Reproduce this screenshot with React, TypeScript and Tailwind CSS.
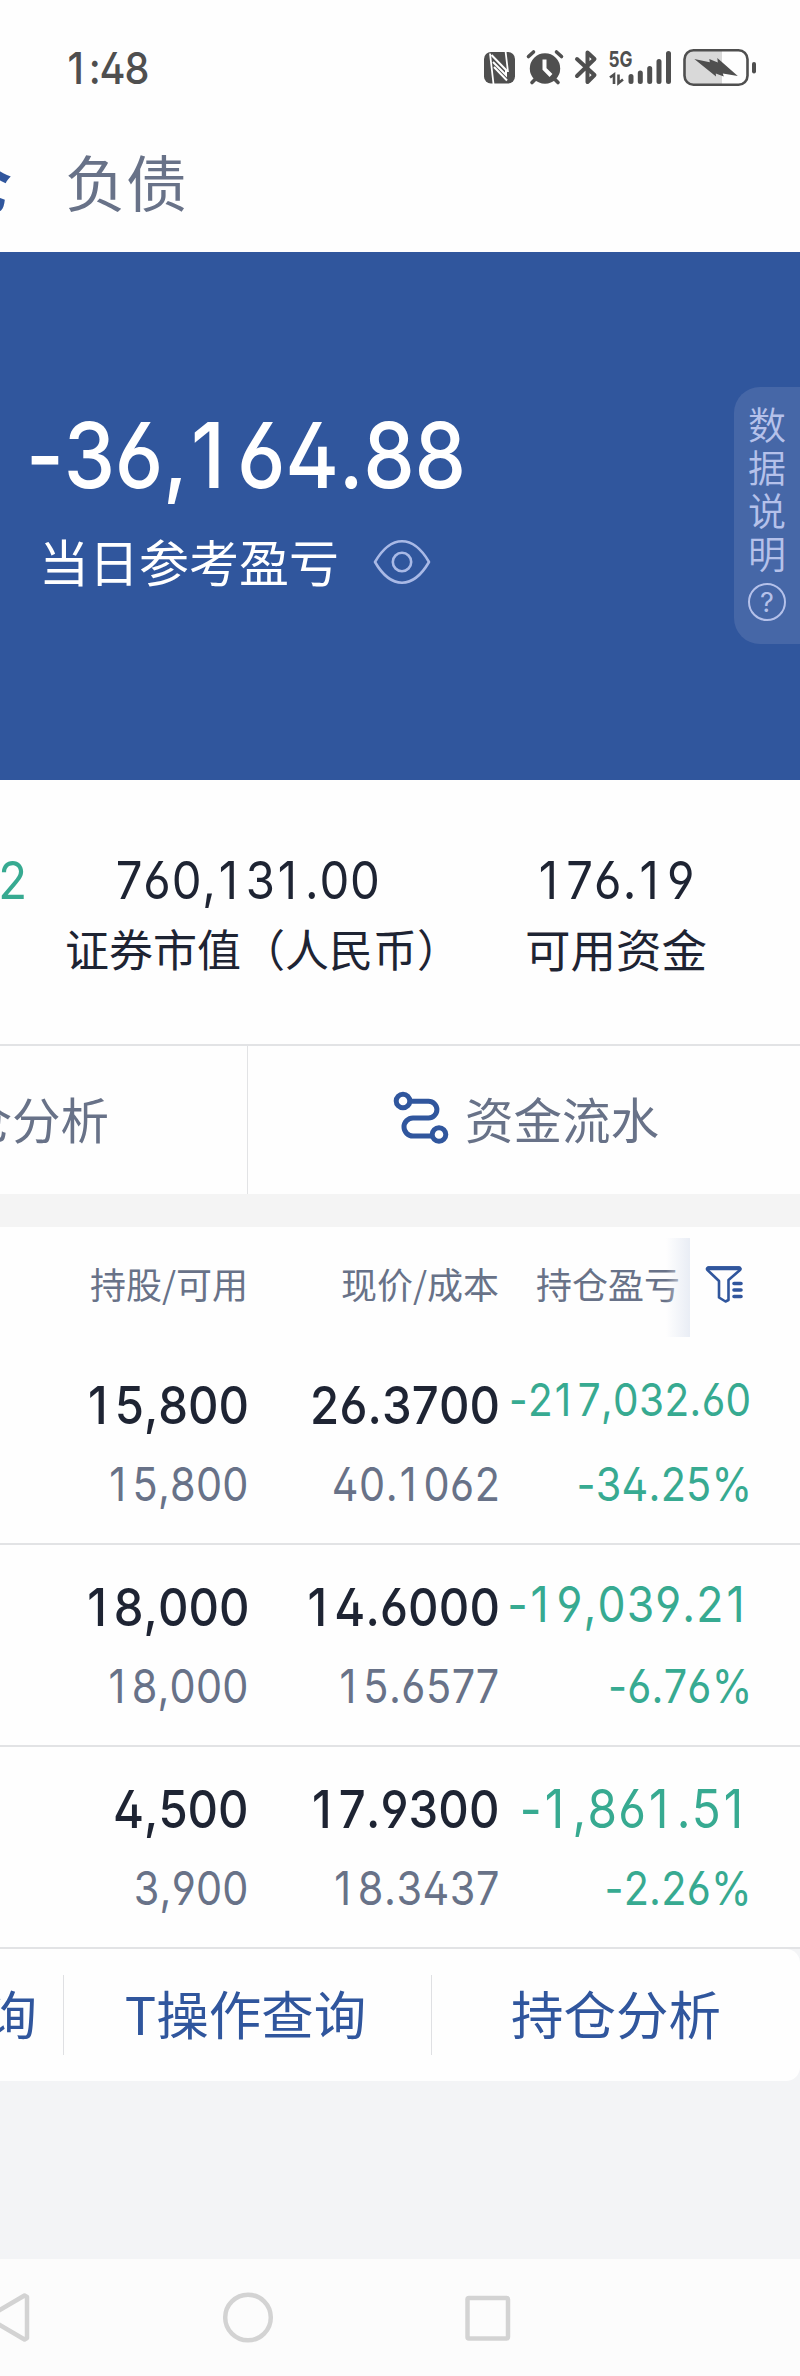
import React from 'react';

interface NumProps {
  children: string;
  className?: string;
}

// Slightly condensed figures with open 4, 6 and 9.
// The narrow "1" is padded to the width of the other digits.
const Num: React.FC<NumProps> = ({ children, className = '' }) => (
  <span className={`block whitespace-nowrap scale-x-[0.9] font-['Inter',sans-serif] [font-feature-settings:'cv02','cv03','cv04','calt'_0,'kern'_0] ${className}`}>
    {children.split(/(1)/).filter(Boolean).map((part, i) => (
      part === '1' ? <span key={i} className="pl-[0.04em] pr-[0.15em]">1</span> : part
    ))}
  </span>
);

const StatusIcons: React.FC = () => (
  <svg width="272" height="40" viewBox="484 48 272 40" fill="none">
    {/* NFC */}
    <rect x="484" y="52" width="31" height="31.5" rx="7" fill="#4f4f4f" />
    <path d="M490 53.5L493.5 84M505.5 51l2.5 21" stroke="#fff" strokeWidth="1.8" />
    <path d="M491.5 55l14.5 15v5L493 62M494 67l13 13.5" stroke="#fff" strokeWidth="2" />
    {/* Alarm */}
    <circle cx="545" cy="68.5" r="15.2" fill="#4f4f4f" />
    <path d="M528.5 56.5l5-4.5M561.5 56.5l-5-4.5M532 82.5l4-4M558 82.5l-4-4" stroke="#4f4f4f" strokeWidth="3.6" strokeLinecap="round" />
    <path d="M544.5 59.5v9.5l6.5 6.5" stroke="#fff" strokeWidth="4" />
    {/* Bluetooth */}
    <path d="M577 59l17.5 16-7 7V52.5l7 6.500L577 76" stroke="#4f4f4f" strokeWidth="4" strokeLinecap="round" strokeLinejoin="round" />
    {/* Signal */}
    <text x="608.5" y="67" fontSize="22" fontWeight="700" fontFamily="Inter" fill="#4f4f4f" textLength="24" lengthAdjust="spacingAndGlyphs">5G</text>
    <path d="M610 77.5l4-3V84M618.5 74.5V83l4.500-3.500" stroke="#4f4f4f" strokeWidth="2.6" />
    <path d="M631 76.5v5M640.3 73v8.5M649.7 68.5v13M659 61.5v20M668.5 53.5v28" stroke="#4f4f4f" strokeWidth="5" strokeLinecap="round" />
    {/* Battery */}
    <path d="M693 50.5h29v34.5h-29a8 8 0 0 1-8-8v-18.5a8 8 0 0 1 8-8z" fill="#d9d9d9" />
    <rect x="684.5" y="50.3" width="63" height="34.5" rx="9" stroke="#4f4f4f" strokeWidth="2.6" />
    <path d="M694.3 59l15.5 3.200-.5-3.200 8.500 3.500-.5-4.500 20.500 18-15-2.500 1 3-8-3 .2 3z" fill="#4f4f4f" />
    <rect x="752" y="62" width="4" height="11.5" rx="2" fill="#4f4f4f" />
  </svg>
);

const EyeIcon: React.FC = () => (
  <svg width="58" height="46" viewBox="0 0 58 46" fill="none" stroke="#a9b9e6" strokeWidth="2.6">
    <path d="M2 23C9 11 18 2.3 29 2.3S49 11 56 23C49 35 40 43.7 29 43.7S9 35 2 23z" strokeLinejoin="round" />
    <circle cx="29" cy="23" r="9.2" />
  </svg>
);

const FlowIcon: React.FC = () => (
  <svg width="56" height="54" viewBox="0 0 56 54" fill="none" stroke="#30569d" strokeWidth="5">
    <circle cx="10" cy="10" r="6.8" />
    <circle cx="46" cy="43.5" r="6.8" />
    <path d="M17 10.2h18.5a8.4 8.4 0 0 1 0 16.8H20a9 9 0 0 0 0 18h19" />
  </svg>
);

const FilterIcon: React.FC = () => (
  <svg width="38" height="38" viewBox="0 0 38 38" fill="none" stroke="#30569d" strokeLinecap="round" strokeLinejoin="round">
    <path d="M3.5 2.5h30.5c1.5 0 2 1.5 1 2.5L23.5 15v20l-3 1.5-6.5-4V16L2.5 5c-1-1-.5-2.5 1-2.5z" strokeWidth="2.6" />
    <path d="M3.5 3.2h30.5" strokeWidth="4" />
    <path d="M29 18.5h7M29 25h7M29 31.5h7" strokeWidth="3.6" />
  </svg>
);

interface Holding {
  shares: string;
  available: string;
  price: string;
  cost: string;
  profit: string;
  rate: string;
  profitClass: string;
}

// Longer profit values are drawn smaller so they fit the column
const holdings: Holding[] = [
  { shares: '15,800', available: '15,800', price: '26.3700', cost: '40.1062', profit: '-217,032.60', rate: '-34.25%', profitClass: 'text-[45px] tracking-[0.01em] pb-[11px]' },
  { shares: '18,000', available: '18,000', price: '14.6000', cost: '15.6577', profit: '-19,039.21', rate: '-6.76%', profitClass: 'text-[49.5px] tracking-[0.025em] pb-[5px]' },
  { shares: '4,500', available: '3,900', price: '17.9300', cost: '18.3437', profit: '-1,861.51', rate: '-2.26%', profitClass: 'text-[53px] tracking-[0.025em]' },
];

const HoldingRow: React.FC<{ item: Holding }> = ({ item }) => (
  <div className="h-[202px] border-b-2 border-[#e2e3e5] pt-8">
    <div className="grid grid-cols-[249px_251px_252px] h-[60px] items-center justify-items-end text-[52.5px] leading-[60px] text-[#1e2433]">
      <Num className="origin-right font-medium">{item.shares}</Num>
      <Num className="origin-right font-medium tracking-[0.003em]">{item.price}</Num>
      <Num className={`origin-right text-[#37aa91] leading-[49px] ${item.profitClass}`}>{item.profit}</Num>
    </div>
    <div className="grid grid-cols-[249px_251px_252px] h-[60px] mt-[19px] items-center justify-items-end text-[46px] leading-[60px] text-[#687288]">
      <Num className="origin-right tracking-[0.005em]">{item.available}</Num>
      <Num className="origin-right tracking-[0.013em]">{item.cost}</Num>
      <Num className="origin-right text-[#37aa91] tracking-[0.005em]">{item.rate}</Num>
    </div>
  </div>
);

export default function App() {
  return (
    <div className="w-[800px] h-[2376px] bg-[#fefefe] overflow-hidden whitespace-nowrap font-['Noto_Sans_CJK_SC',sans-serif]">
      {/* Status bar */}
      <div className="h-[136px] flex items-center justify-between pl-[66px] pr-11">
        <Num className="text-[44px] font-medium tracking-[-0.03em] text-[#4f4f4f] origin-left">1:48</Num>
        <StatusIcons />
      </div>

      {/* Tabs */}
      <div className="h-[116px] pb-7 flex items-center">
        <div className="w-3 flex justify-end text-[64px] leading-[89px] font-bold text-[#30569d]">仓</div>
        <div className="ml-[53px] text-[61px] leading-[89px] text-[#687288]">负债</div>
      </div>

      {/* Today's profit */}
      <div className="relative h-[528px] bg-[#30569d] pt-[149px] text-white">
        <div className="h-[108px] flex items-center pl-[26px]">
          <Num className="text-[91px] font-medium tracking-[-0.003em] origin-left">-36,164.88</Num>
        </div>
        <div className="mt-[23px] h-14 flex items-center pl-[39px] text-[50px] leading-[56px]">
          <span>当日参考盈亏</span>
          <span className="ml-[34px] mt-1"><EyeIcon /></span>
        </div>
        <div className="absolute right-0 top-[135px] w-[66px] h-[257px] rounded-l-[26px] bg-[#4667a7] pt-[14px] pl-[14px] text-[#b5c1ea]">
          <div className="w-[38px] text-[38px] leading-[43px] font-[350] whitespace-normal break-all">数据说明</div>
          <div className="mt-[10px] size-[38px] rounded-full border-[2.5px] border-[#b5c1ea] flex items-center justify-center font-['Inter'] text-[27px] leading-none">?</div>
        </div>
      </div>

      {/* Account figures */}
      <div className="h-[264px] pt-[74px] flex text-[#1e2433]">
        <div className="w-16">
          <div className="w-[27px] h-[52px] flex items-center justify-end text-[52.5px] text-[#37aa91]">
            <Num className="origin-right">2</Num>
          </div>
        </div>
        <div className="w-[368px]">
          <div className="h-[52px] flex items-center justify-center text-[52.5px]">
            <Num className="tracking-[0.018em]">760,131.00</Num>
          </div>
          <div className="mt-[18px] ml-px text-[44px] leading-[48px]">证券市值（人民币）</div>
        </div>
        <div className="w-[368px] text-center">
          <div className="h-[52px] flex items-center justify-center text-[52.5px]">
            <Num className="tracking-[0.025em]">176.19</Num>
          </div>
          <div className="mt-[18px] text-[45.5px] leading-[48px]">可用资金</div>
        </div>
      </div>

      {/* Shortcuts */}
      <div className="h-[150px] flex border-t-2 border-[#e2e3e5] text-[48.5px] leading-[144px] text-[#687288]">
        <div className="w-[248px] border-r border-[#e2e3e5]">
          <div className="w-[109px] flex justify-end">仓分析</div>
        </div>
        <div className="flex pl-[145px]">
          <div className="pt-[45px]"><FlowIcon /></div>
          <div className="ml-4">资金流水</div>
        </div>
      </div>
      <div className="h-[33px] bg-[#f4f4f4]" />

      {/* Holdings */}
      <div className="h-[116px] flex text-[36px] leading-[113px] text-[#687288]">
        <div className="w-[248px] text-right">持股/可用</div>
        <div className="w-[251px] text-right">现价/成本</div>
        <div className="relative w-[191px] pl-[37px]">
          持仓盈亏
          <div className="absolute right-0 top-[11px] w-6 h-[99px] bg-gradient-to-r from-[#e9edf5]/0 to-[#e9edf5]" />
        </div>
        <div className="pl-[15px] pt-[38px]"><FilterIcon /></div>
      </div>
      {holdings.map((item) => (
        <HoldingRow key={item.profit} item={item} />
      ))}

      {/* Bottom actions */}
      <div className="h-[310px] bg-[#f3f4f6]">
        <div className="h-[132px] flex items-center rounded-r-[14px] bg-[#fefefe] text-[52.5px] leading-[74px] text-[#30569d]">
          <div className="w-16 h-20 border-r border-[#dfe0e3]">
            <div className="w-[37px] flex justify-end">询</div>
          </div>
          <div className="w-[368px] h-20 border-r border-[#dfe0e3] pr-1 text-center">T操作查询</div>
          <div className="w-[368px] h-20 text-center">持仓分析</div>
        </div>
      </div>

      {/* System navigation */}
      <div className="h-[117px] bg-[#fcfcfc]">
        <svg width="800" height="117" viewBox="0 0 800 117" fill="none" stroke="#d3d3d3" strokeWidth="4.5" strokeLinejoin="round">
          <path d="M24.5 36.5L27 38V79l-2.5 1.5L-13 58.5z" />
          <circle cx="248" cy="58.5" r="22.8" />
          <rect x="467.5" y="39" width="40.5" height="40.5" rx="1.5" />
        </svg>
      </div>
    </div>
  );
}
